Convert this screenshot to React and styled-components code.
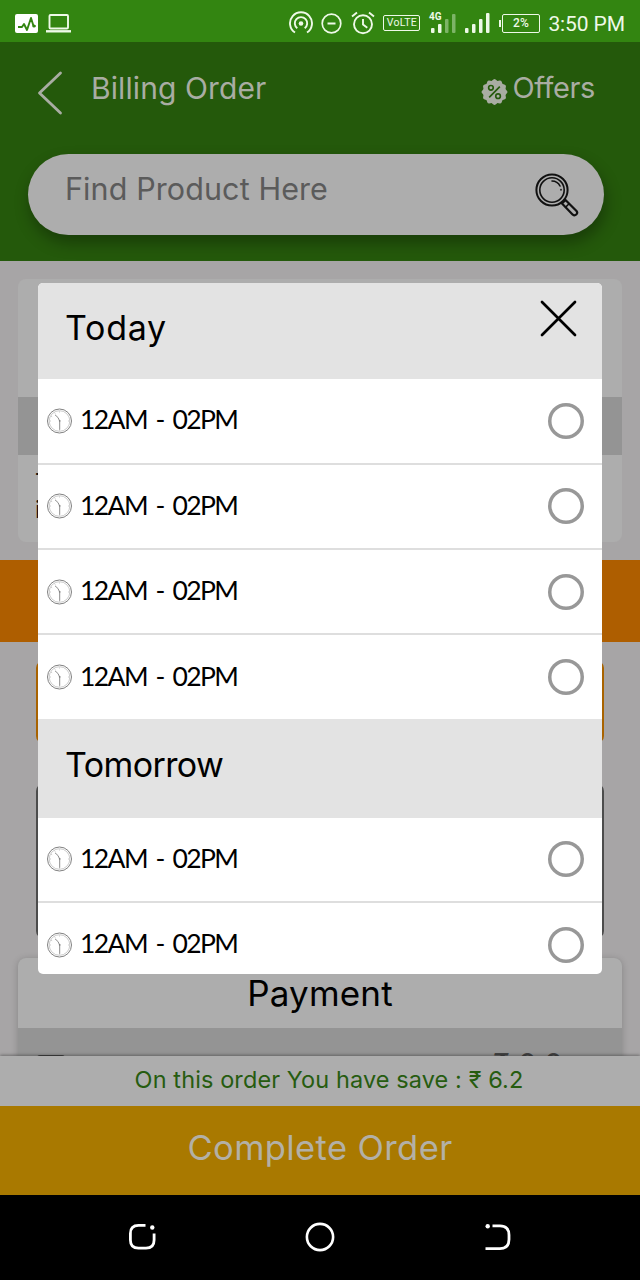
import React from "react";
import styled, { createGlobalStyle } from "styled-components";

const GlobalStyle = createGlobalStyle`
  * { box-sizing: border-box; }
  body { margin: 0; background: #000; font-family: Inter, "Noto Sans", sans-serif; }
`;

const Screen = styled.div`
  position: relative;
  width: 640px;
  height: 1280px;
  display: flex;
  flex-direction: column;
  overflow: hidden;
`;

/* Status bar */
const StatusBar = styled.div`
  height: 42px;
  flex: none;
  display: flex;
  align-items: center;
  justify-content: space-between;
  padding: 4px 15px 0 15px;
  background: #338511;
  color: #eef9e8;
  font-family: Roboto, sans-serif;
`;
const StatusGroup = styled.div`
  display: flex;
  align-items: center;
  gap: ${(p) => p.$gap}px;
`;
const VolteBadge = styled.span`
  width: 37px;
  height: 16px;
  border: 1.6px solid currentColor;
  border-radius: 2px;
  font-size: 10.5px;
  line-height: 14px;
  text-align: center;
  letter-spacing: 0.3px;
`;
const Battery = styled.span`
  display: flex;
  align-items: center;
  gap: 1px;
  &::before {
    content: "";
    width: 2px;
    height: 7px;
    background: currentColor;
  }
`;
const BatteryCell = styled.span`
  width: 38px;
  height: 19px;
  border: 1.5px solid currentColor;
  border-radius: 2px;
  font-size: 12px;
  font-weight: 500;
  line-height: 17px;
  text-align: center;
`;
const Clock = styled.span`
  font-size: 21px;
  line-height: 24px;
  letter-spacing: -0.1px;
  margin-top: 2px;
`;

/* Header */
const Header = styled.header`
  height: 219px;
  flex: none;
  background: #24590b;
  color: #a9ada3;
`;
const TitleRow = styled.div`
  height: 91px;
  display: flex;
  align-items: center;
  padding: 0 45px 0 37px;
`;
const BackButton = styled.button`
  display: flex;
  padding: 0;
  margin: 10px 28px 0 0;
  border: 0;
  background: none;
  color: inherit;
`;
const Title = styled.h1`
  flex: 1;
  margin: 0;
  font-size: 30px;
  font-weight: 400;
  letter-spacing: 0.1px;
`;
const Offers = styled.a`
  display: flex;
  align-items: center;
  gap: 5px;
  font-size: 29px;
  letter-spacing: -0.4px;
  svg { margin-top: 9px; }
`;
const SearchBox = styled.div`
  width: 576px;
  height: 81px;
  margin: 21px 0 0 28px;
  padding: 0 25px 0 37px;
  display: flex;
  align-items: center;
  justify-content: space-between;
  border-radius: 41px;
  background: #adadad;
  box-shadow: 2px 8px 16px rgba(0, 0, 0, 0.32);
`;
const Placeholder = styled.span`
  padding-bottom: 12px;
  color: #5b5b5b;
  font-size: 30.5px;
  letter-spacing: 0.1px;
`;

/* Page behind the dialog */
const Page = styled.main`
  flex: 1;
  min-height: 0;
  overflow: hidden;
  display: flex;
  flex-direction: column;
  background: #a7a5a6;
`;
const AddressCard = styled.section`
  flex: none;
  height: 263px;
  margin: 18px 18px 0;
  display: flex;
  flex-direction: column;
  border-radius: 8px;
  overflow: hidden;
  background: #adadad;
`;
const CardBand = styled.div`
  height: 58px;
  margin-top: 118px;
  background: #949494;
`;
const CardText = styled.div`
  padding: 14px 17px;
  color: #111;
  font-size: 24px;
  line-height: 27px;
`;
const Banner = styled.div`
  flex: none;
  height: 81.5px;
  margin-top: 18px;
  background: #ae5e00;
`;
const Field = styled.div`
  flex: none;
  height: ${(p) => p.$height}px;
  margin: ${(p) => p.$top}px 36px 0;
  border: ${(p) => p.$line} solid ${(p) => p.$color};
  border-radius: 7px;
`;
const PaymentCard = styled.section`
  flex: none;
  height: 200px;
  margin: 20px 18px 0;
  border-radius: 8px 8px 0 0;
  background: #949494;
  box-shadow: 0 1px 7px rgba(0, 0, 0, 0.2);
`;
const PaymentTitle = styled.h2`
  height: 70.5px;
  margin: 0;
  display: flex;
  align-items: center;
  justify-content: center;
  border-radius: 8px 8px 0 0;
  background: #adadad;
  color: #000;
  font-size: 35px;
  font-weight: 400;
  letter-spacing: 0.18px;
`;
const PaymentRow = styled.div`
  display: flex;
  justify-content: space-between;
  padding: 17.5px 59px 0 19px;
  color: #444;
  font-size: 30px;
`;
const CashIcon = styled.span`
  width: 28px;
  height: 20px;
  margin-top: 9px;
  border: 2px solid #444;
  border-radius: 3px;
`;

/* Footer */
const SavingsBar = styled.div`
  height: 50px;
  flex: none;
  display: flex;
  align-items: center;
  justify-content: center;
  padding-left: 18px;
  padding-bottom: 2px;
  background: #adadad;
  box-shadow: 0 -1px 3px rgba(0, 0, 0, 0.35);
  color: #265c10;
  font-size: 23.5px;
  letter-spacing: 0.1px;
  z-index: 1;
`;
const CompleteButton = styled.button`
  height: 89px;
  flex: none;
  padding: 0 0 6px;
  border: 0;
  background: #a97900;
  color: #b3b0a6;
  font-family: inherit;
  font-size: 34.5px;
  letter-spacing: 0.4px;
  z-index: 1;
`;
const NavBar = styled.nav`
  height: 85.5px;
  flex: none;
  display: flex;
  align-items: center;
  justify-content: space-between;
  padding: 0 128px;
  background: #000;
`;

/* Delivery slot dialog */
const Dialog = styled.div`
  position: absolute;
  top: 283px;
  left: 38px;
  width: 564px;
  height: 691px;
  overflow: hidden;
  border-radius: 5px;
  background: #fff;
  color: #000;
  z-index: 2;
`;
const DayHeader = styled.div`
  height: ${(p) => p.$height}px;
  display: flex;
  align-items: center;
  justify-content: space-between;
  padding: 0 25px 0 27px;
  background: #e3e3e3;
`;
const DayTitle = styled.h2`
  margin: 0;
  padding-bottom: 7px;
  font-size: 34px;
  font-weight: 400;
  letter-spacing: ${(p) => p.$spacing}px;
`;
const CloseButton = styled.button`
  align-self: flex-start;
  display: flex;
  margin-top: 17px;
  padding: 0;
  border: 0;
  background: none;
  color: #000;
`;
const SlotRow = styled.label`
  height: 85.35px;
  display: flex;
  align-items: center;
  padding: 0 18px 0 8px;
  border-bottom: 2px solid #dedede;
  &:last-child { height: 84px; border-bottom: 0; }
`;
const SlotText = styled.span`
  flex: 1;
  margin-left: 8px;
  padding-bottom: 3px;
  font-family: Lato, "Noto Sans", sans-serif;
  font-size: 26.5px;
  letter-spacing: -1.6px;
  word-spacing: 3.5px;
`;
const Radio = styled.span`
  width: 36px;
  height: 36px;
  border-radius: 50%;
  box-shadow: inset 0 0 0 3.5px #989898;
`;

const ActivityIcon = () => (
  <svg width="23" height="19" viewBox="0 0 23 19">
    <rect width="23" height="19" rx="2" fill="#fff" />
    <path d="M3 13h4l2-3 3 6 4-12 2.500 8h2" fill="none" stroke="#338511" strokeWidth="1.900" strokeLinejoin="round" />
    <circle cx="19" cy="12" r="1.600" fill="#338511" />
  </svg>
);
const LaptopIcon = () => (
  <svg width="25" height="19" viewBox="0 0 25 19" fill="none" stroke="currentColor">
    <rect x="3.500" y="1" width="18.500" height="13.500" rx="1" strokeWidth="1.900" />
    <path d="M0 17.300h25" strokeWidth="2.400" />
  </svg>
);
const HotspotIcon = () => (
  <svg width="24" height="24" viewBox="0 0 24 24" fill="none" stroke="currentColor" strokeWidth="1.900">
    <path d="M6 21.500A11 11 0 1 1 18 21.500" />
    <path d="M8.300 17.300A6.200 6.200 0 1 1 15.700 17.300" />
    <circle cx="12" cy="12.500" r="2.300" fill="currentColor" stroke="none" />
  </svg>
);
const MinusCircleIcon = () => (
  <svg width="21" height="21" viewBox="0 0 21 21" fill="none" stroke="currentColor" strokeWidth="1.700">
    <circle cx="10.500" cy="10.500" r="9.300" />
    <path d="M6.500 10.500h8" strokeWidth="2" />
  </svg>
);
const AlarmIcon = () => (
  <svg width="24" height="24" viewBox="0 0 24 24" fill="none" stroke="currentColor" strokeWidth="1.900">
    <circle cx="12" cy="13.200" r="9" />
    <path d="M12 8v5.500l4.300 3.200M1 5.500 6 1.500M23 5.500 18 1.500" />
  </svg>
);
const Network = styled.span`
  display: flex;
  flex-direction: column;
  width: 28px;
  height: 23px;
  font-size: 10px;
  font-weight: 700;
  line-height: 9px;
`;
const NetworkBars = styled.svg`
  margin-top: -8px;
  overflow: visible;
`;
const Signal4G = () => (
  <Network>
    4G
    <NetworkBars width="28" height="20" viewBox="0 0 28 20" fill="currentColor">
      <rect x="2" y="15" width="3.500" height="5" rx="1" />
      <rect x="9" y="11" width="3.500" height="9" rx="1" />
      <rect x="16" y="6" width="3.500" height="14" rx="1" opacity=".4" />
      <rect x="23" y="1" width="3.500" height="19" rx="1" opacity=".4" />
    </NetworkBars>
  </Network>
);
const SignalIcon = () => (
  <svg width="25" height="20" viewBox="0 0 25 20" fill="currentColor">
    <rect y="15" width="3.500" height="5" rx="1" />
    <rect x="7" y="11" width="3.500" height="9" rx="1" />
    <rect x="14" y="6" width="3.500" height="14" rx="1" />
    <rect x="21" y="0" width="3.500" height="20" rx="1" />
  </svg>
);
const ChevronIcon = () => (
  <svg width="26" height="44" viewBox="0 0 26 44" fill="none" stroke="currentColor" strokeWidth="2.800" strokeLinecap="round" strokeLinejoin="round">
    <path d="M23.500 2 2.500 22l21 20" />
  </svg>
);
const badgePath = Array.from({ length: 73 }, (_, i) => {
  const angle = (i / 72) * Math.PI * 2;
  const r = 12.7 + Math.cos(angle * 12) * 0.8;
  return `${i ? "L" : "M"}${(14 + r * Math.sin(angle)).toFixed(2)} ${(14 - r * Math.cos(angle)).toFixed(2)}`;
}).join("");
const PercentIcon = () => (
  <svg width="27" height="28" viewBox="0 0 28 28">
    <path d={`${badgePath}Z`} fill="#a9ada3" />
    <g fill="none" stroke="#24590b" strokeWidth="1.700">
      <circle cx="10.300" cy="9.700" r="2.400" />
      <circle cx="17.700" cy="18.300" r="2.400" />
      <path d="M19.500 8.500 8.500 19.500" />
    </g>
  </svg>
);
const SearchIcon = () => (
  <svg width="44" height="44" viewBox="0 0 44 44" fill="none" stroke="#111" strokeLinecap="round">
    <circle cx="17" cy="17" r="15.600" strokeWidth="2" />
    <circle cx="17" cy="17" r="12.200" strokeWidth="1.600" />
    <path d="M17 8a9 9 0 0 1 8 5M26 16.500v.500" strokeWidth="1.600" />
    <path d="m27 30.500 3.500-3.500 11 11q1.500 2-.200 3.500t-3.500.200z" strokeWidth="2.200" strokeLinejoin="round" />
    <path d="m30.800 34 3-3" strokeWidth="1.700" />
  </svg>
);
const CloseIcon = () => (
  <svg width="37" height="37" viewBox="0 0 37 37" fill="none" stroke="currentColor" strokeWidth="2.700" strokeLinecap="round">
    <path d="M2 2l33 33M35 2 2 35" />
  </svg>
);
const ticks = [0, 90, 180, 270, 300, 330];
const ClockIcon = () => (
  <svg width="26" height="26" viewBox="0 0 26 26" fill="none" stroke="#808080">
    <circle cx="13.500" cy="13" r="12" strokeWidth="1" />
    <circle cx="13.500" cy="13" r="10.300" strokeWidth=".6" stroke="#aaa" />
    {ticks.map((a) => (
      <path key={a} d="M13.500 3.300v1.200" strokeWidth=".6" stroke="#aaa" transform={`rotate(${a} 13.500 13)`} />
    ))}
    <path d="M13.700 21.800V13Q12.500 9 9 6.800" strokeWidth="1" stroke="#8c8c8c" />
    <circle cx="13.700" cy="12.800" r=".9" fill="#808080" stroke="none" />
  </svg>
);
const RecentsIcon = () => (
  <svg width="28" height="28" viewBox="0 0 28 28" fill="none" stroke="#fff" strokeWidth="2.800">
    <path d="M17.500 2.400H10.500Q2.400 2.400 2.400 10.500V17Q2.400 25.200 10.500 25.200H18Q26.100 25.200 26.100 17V10.500" />
    <circle cx="24.300" cy="4.500" r="2.200" fill="#fff" stroke="none" />
  </svg>
);
const HomeIcon = () => (
  <svg width="30" height="30" viewBox="0 0 30 30" fill="none" stroke="#fff" strokeWidth="2.600">
    <circle cx="15" cy="15" r="13.100" />
  </svg>
);
const BackIcon = () => (
  <svg width="28" height="28" viewBox="0 0 28 28" fill="none" stroke="#fff" strokeWidth="2.800">
    <path d="M8.500 2.900h7.500Q25 2.900 25 12v4.500Q25 25.600 16 25.600H1.500" />
    <circle cx="3.700" cy="3.200" r="2.200" fill="#fff" stroke="none" />
  </svg>
);

const Slot = ({ children }) => (
  <SlotRow>
    <ClockIcon />
    <SlotText>{children}</SlotText>
    <Radio />
  </SlotRow>
);

const days = [
  { name: "Today", spacing: 0.75, height: 96.2, slots: ["12AM - 02PM", "12AM - 02PM", "12AM - 02PM", "12AM - 02PM"] },
  { name: "Tomorrow", spacing: -0.6, height: 98.4, slots: ["12AM - 02PM", "12AM - 02PM"] },
];

export default function App() {
  return (
    <Screen>
      <GlobalStyle />
      <StatusBar>
        <StatusGroup $gap={8}>
          <ActivityIcon />
          <LaptopIcon />
        </StatusGroup>
        <StatusGroup $gap={8.5}>
          <HotspotIcon />
          <MinusCircleIcon />
          <AlarmIcon />
          <VolteBadge>VoLTE</VolteBadge>
          <Signal4G />
          <SignalIcon />
          <Battery>
            <BatteryCell>2%</BatteryCell>
          </Battery>
          <Clock>3:50 PM</Clock>
        </StatusGroup>
      </StatusBar>
      <Header>
        <TitleRow>
          <BackButton aria-label="Back">
            <ChevronIcon />
          </BackButton>
          <Title>Billing Order</Title>
          <Offers>
            <PercentIcon />
            Offers
          </Offers>
        </TitleRow>
        <SearchBox>
          <Placeholder>Find Product Here</Placeholder>
          <SearchIcon />
        </SearchBox>
      </Header>
      <Page>
        <AddressCard>
          <CardBand />
          <CardText>
            T<br />i
          </CardText>
        </AddressCard>
        <Banner />
        <Field $height={82} $top={19} $line="3px" $color="#a96300" />
        <Field $height={154} $top={41} $line="2px" $color="#4c4c4c" />
        <PaymentCard>
          <PaymentTitle>Payment</PaymentTitle>
          <PaymentRow>
            <CashIcon />
            <span>₹ 0.0</span>
          </PaymentRow>
        </PaymentCard>
      </Page>
      <SavingsBar>On this order You have save : ₹ 6.2</SavingsBar>
      <CompleteButton>Complete Order</CompleteButton>
      <NavBar>
        <RecentsIcon />
        <HomeIcon />
        <BackIcon />
      </NavBar>
      <Dialog role="dialog">
        {days.map((day, i) => (
          <div key={day.name}>
            <DayHeader $height={day.height}>
              <DayTitle $spacing={day.spacing}>{day.name}</DayTitle>
              {i === 0 && (
                <CloseButton aria-label="Close">
                  <CloseIcon />
                </CloseButton>
              )}
            </DayHeader>
            {day.slots.map((slot, n) => (
              <Slot key={n}>{slot}</Slot>
            ))}
          </div>
        ))}
      </Dialog>
    </Screen>
  );
}
